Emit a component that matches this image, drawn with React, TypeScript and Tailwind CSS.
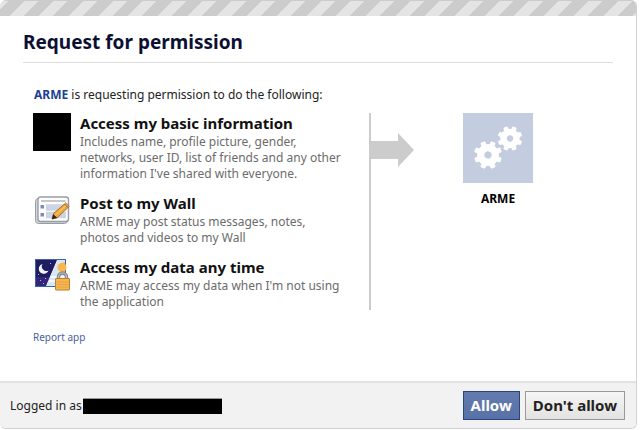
import type { ReactNode } from "react";

type Permission = {
  title: string;
  description: string;
  icon: ReactNode;
};

function WallIcon() {
  return (
    <svg width="38" height="30" viewBox="0 0 38 30" className="mt-[3px]" aria-hidden="true">
      <rect x="2.5" y="2.5" width="32" height="25" rx="3" fill="#d3d6dc" stroke="#9a9da4" />
      <rect x="5" y="1" width="30.500" height="24.500" rx="2.500" fill="#fdfdfd" stroke="#989ca4" strokeWidth="1.400" />
      <path d="M8 5h24.500" stroke="#b4b4b4" strokeWidth="1.600" />
      <path d="M13 11.500h20M13 19h20" stroke="#ccd4e6" strokeWidth="6.500" />
      <path d="M7.500 9h3.500v3.500H7.500zM7.500 17h3.500v3.500H7.500z" fill="#7a8db6" />
      <path d="M19 23l1.500-5.500L31.500 8l3.500 3.500-11 10.500z" fill="#f2a737" stroke="#8d6224" strokeWidth=".8" />
      <path d="M22 19.500L33 9.500" stroke="#fbd07c" />
      <path d="M31.500 8l3.500 3.500 1.300-1.300-3.400-3.500z" fill="#d9a565" stroke="#8d6224" strokeWidth=".6" />
      <path d="M18.800 23.200l1.500-5 3.800 3.600z" fill="#2c2620" />
    </svg>
  );
}

function DayNightIcon() {
  return (
    <svg width="38" height="33" viewBox="0 0 38 33" className="mt-[2px]" aria-hidden="true">
      <rect x="2.500" y=".5" width="30" height="27" fill="#d6e7f8" stroke="#3d62a8" />
      <path d="M16 18h16M14 22h18" stroke="#f4f9fe" strokeWidth="2" />
      <path d="M32 3a5.500 5.500 0 0 0 0 11z" fill="#fbb74c" />
      <circle cx="29" cy="8.500" r="4.500" fill="#fbb74c" />
      <path d="M3 1h21.500L13.500 27H3z" fill="#1f1c61" />
      <path d="M3 18h14.300L13.500 27H3z" fill="#34277a" />
      <path d="M24.500 1L13.500 27" stroke="#f2f6fc" />
      <path d="M9.500 5a5 5 0 1 0 6 6.500a4.600 4.600 0 0 1-6-6.500z" fill="#f3f4fb" />
      <path d="M5 15h1v1H5zM17 4h1v1h-1zM7 21h1v1H7zM12 19h1v1h-1zM10 24h1v1h-1z" fill="#aeb2e0" />
      <path d="M25.500 20.500v-2.500a4 4 0 0 1 8 0v2.500" fill="none" stroke="#858585" strokeWidth="3.400" />
      <path d="M25.500 20.500v-2.500a4 4 0 0 1 8 0v2.500" fill="none" stroke="#c4c4c4" strokeWidth="1.200" />
      <rect x="22.500" y="19.500" width="14" height="11.500" rx=".5" fill="#f7b652" stroke="#b58038" />
      <path d="M23.500 23h12M23.500 25.500h12M23.500 28h12" stroke="#e39d3b" strokeWidth=".8" />
    </svg>
  );
}

function Gear({ x, y, scale }: { x: number; y: number; scale: number }) {
  return (
    <g transform={`translate(${x} ${y}) scale(${scale}) rotate(22.5)`}>
      {[0, 45, 90, 135, 180, 225, 270, 315].map((angle) => (
        <rect key={angle} x="-2.600" y="-14" width="5.200" height="6" rx="1.200" transform={`rotate(${angle})`} fill="#fff" />
      ))}
      <circle r="7.300" fill="none" stroke="#fff" strokeWidth="7.400" />
    </g>
  );
}

function AppLogo() {
  return (
    <svg width="70" height="70" viewBox="0 0 70 70" aria-hidden="true">
      <rect width="70" height="70" fill="#c4cce0" />
      <Gear x={25} y={42} scale={1} />
      <Gear x={47} y={25.5} scale={0.88} />
    </svg>
  );
}

const permissions: Permission[] = [
  {
    title: "Access my basic information",
    description:
      "Includes name, profile picture, gender, networks, user ID, list of friends and any other information I've shared with everyone.",
    icon: <div className="h-[38px] bg-black" />,
  },
  {
    title: "Post to my Wall",
    description: "ARME may post status messages, notes, photos and videos to my Wall",
    icon: <WallIcon />,
  },
  {
    title: "Access my data any time",
    description: "ARME may access my data when I'm not using the application",
    icon: <DayNightIcon />,
  },
];

export default function App() {
  return (
    <main className="mr-[3px] overflow-hidden rounded-md border-r border-b border-[#d0d0d0] bg-white font-['Noto_Sans','Open_Sans',sans-serif] text-[12px] leading-4 text-[#222]">
      <div className="h-4 border-t border-[#cccccc] bg-[repeating-linear-gradient(135deg,#e4e4e4_0px,#e4e4e4_6px,#cccccc_6px,#cccccc_17px,#e4e4e4_17px,#e4e4e4_21px)]" />

      <div className="px-[23px] pt-[14px] pb-9">
        <h1 className="border-b border-[#dddddd] pb-2 text-[19px] leading-6 font-bold text-[#0b1033]">
          Request for permission
        </h1>

        <div className="px-[10px] pt-6">
          <p className="pl-px">
            <b className="text-[#1c3f94]">ARME</b> is requesting permission to do the following:
          </p>

          <div className="mt-[10px] flex">
            <ul className="flex w-[338px] flex-col gap-[11px] border-r-2 border-[#cccccc]">
              {permissions.map((item) => (
                <li key={item.title} className="flex gap-[9px]">
                  <div className="w-[38px] shrink-0">{item.icon}</div>
                  <div className="w-[264px]">
                    <h2 className="pb-px text-[15px] leading-5 font-bold text-[#111]">{item.title}</h2>
                    <p className="text-[#6b6b6b]">{item.description}</p>
                  </div>
                </li>
              ))}
            </ul>
            <svg width="43" height="34" viewBox="0 0 43 34" className="mt-5 shrink-0" aria-hidden="true">
              <path d="M0 8h27V0l16 17-16 17v-8H0z" fill="#cccccc" />
            </svg>
            <div className="ml-[49px] flex flex-col items-center gap-2">
              <AppLogo />
              <b className="text-black">ARME</b>
            </div>
          </div>

          <a href="#report" className="mt-[19px] inline-block text-[10px] leading-4 text-[#4a5f9e]">
            Report app
          </a>
        </div>
      </div>

      <footer className="flex items-center justify-between border-t-2 border-[#e2e2e2] bg-[#f2f2f2] py-2 pr-[11px] pl-[10px]">
        <div className="flex items-center gap-px">
          <span>Logged in as</span>
          <span className="h-4 w-[139px] border-t border-[#999999] bg-black" />
        </div>
        <div className="flex gap-[5px] text-[15px] leading-5 font-bold">
          <button
            type="button"
            className="border border-[#29447e] bg-linear-to-b from-[#637bad] to-[#5872a7] px-[7px] pt-[3px] pb-1 text-white"
          >
            Allow
          </button>
          <button
            type="button"
            className="border border-[#999999] bg-linear-to-b from-[#f6f6f6] to-[#e2e2e0] px-[7px] pt-[3px] pb-1 text-[#222]"
          >
            Don't allow
          </button>
        </div>
      </footer>
    </main>
  );
}
